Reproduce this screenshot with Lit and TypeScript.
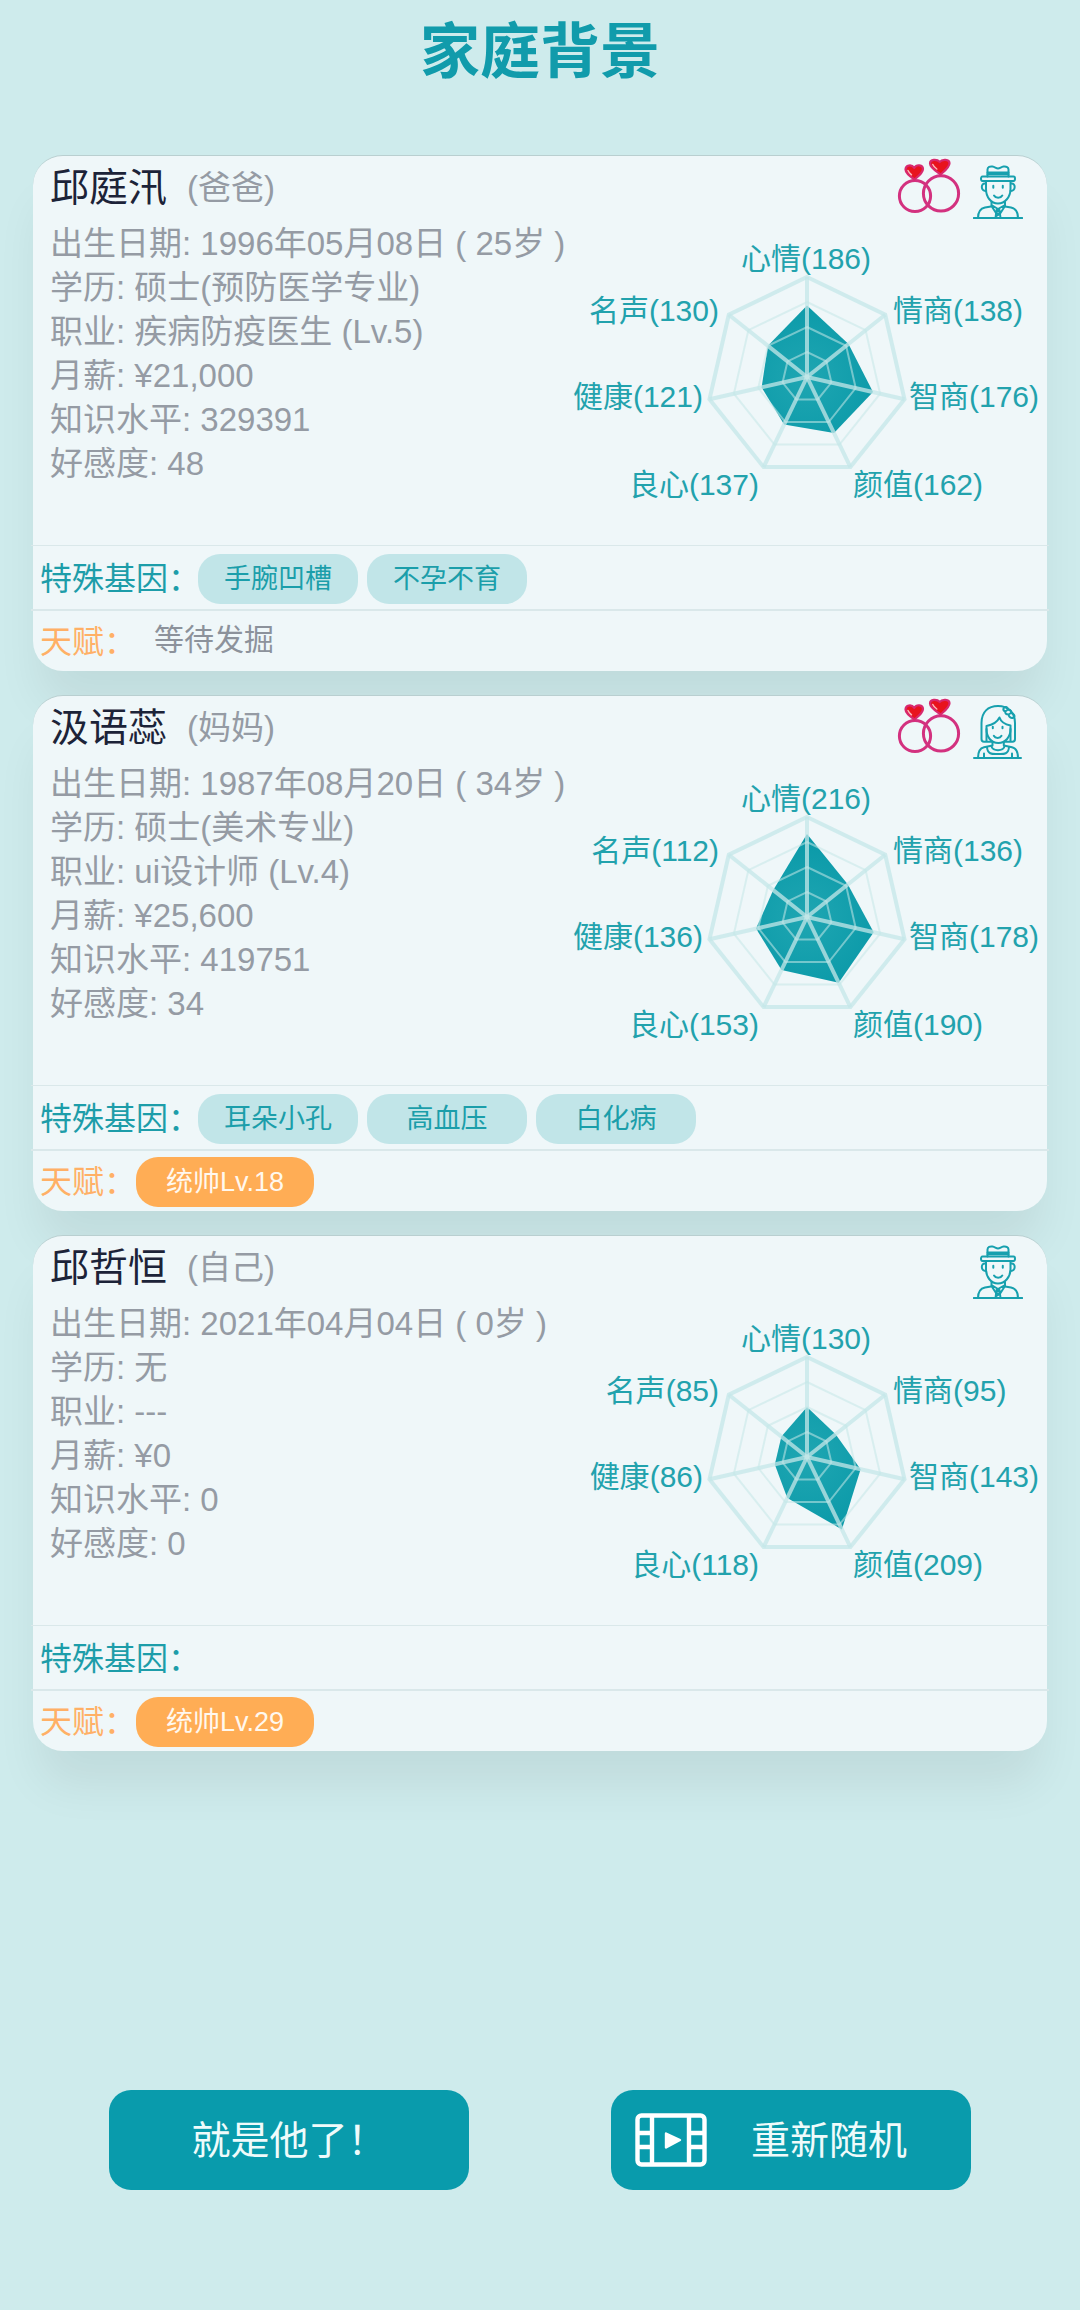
import { LitElement, html, svg, css, nothing } from "lit";
import { customElement, property } from "lit/decorators.js";

interface Person {
  name: string;
  role: string;
  gender: "male" | "female";
  married: boolean;
  facts: [string, string][];
  /* mood, EQ, IQ, looks, conscience, health, fame */
  stats: number[];
  genes: string[];
  talent?: string;
}

const PEOPLE: Person[] = [
  {
    name: "邱庭汛",
    role: "爸爸",
    gender: "male",
    married: true,
    facts: [
      ["出生日期", "1996年05月08日 ( 25岁 )"],
      ["学历", "硕士(预防医学专业)"],
      ["职业", "疾病防疫医生 (Lv.5)"],
      ["月薪", "¥21,000"],
      ["知识水平", "329391"],
      ["好感度", "48"],
    ],
    stats: [186, 138, 176, 162, 137, 121, 130],
    genes: ["手腕凹槽", "不孕不育"],
  },
  {
    name: "汲语蕊",
    role: "妈妈",
    gender: "female",
    married: true,
    facts: [
      ["出生日期", "1987年08月20日 ( 34岁 )"],
      ["学历", "硕士(美术专业)"],
      ["职业", "ui设计师 (Lv.4)"],
      ["月薪", "¥25,600"],
      ["知识水平", "419751"],
      ["好感度", "34"],
    ],
    stats: [216, 136, 178, 190, 153, 136, 112],
    genes: ["耳朵小孔", "高血压", "白化病"],
    talent: "统帅Lv.18",
  },
  {
    name: "邱哲恒",
    role: "自己",
    gender: "male",
    married: false,
    facts: [
      ["出生日期", "2021年04月04日 ( 0岁 )"],
      ["学历", "无"],
      ["职业", "---"],
      ["月薪", "¥0"],
      ["知识水平", "0"],
      ["好感度", "0"],
    ],
    stats: [130, 95, 143, 209, 118, 86, 85],
    genes: [],
    talent: "统帅Lv.29",
  },
];

const ringsIcon = html`
  <svg class="rings" viewBox="0 0 64 56" role="img" aria-label="已婚">
    <g fill="none" stroke="#d3317f" stroke-width="3">
      <circle cx="18" cy="38" r="15.6" />
      <circle cx="44" cy="35.4" r="17.6" />
    </g>
    <g fill="#e8131d" stroke="#d8296f" stroke-width="2.2" stroke-linejoin="round">
      <path d="M17.5 21.5C13 18.500 8.500 15 8.500 11.500C8.500 7 14.500 6 17.300 9.800C19.500 6 26 6.500 26 11C26 15 21 18.500 17.500 21.500Z" />
      <path d="M43.500 16.500C38.500 13 33 9.500 33 5.500C33 1.200 39.800 .8 42.800 4C45 .8 52.500 1 52.500 5.200C52.500 9.500 47.500 13 43.500 16.500Z" />
    </g>
    <g fill="none" stroke="#fbb9c0" stroke-width="1.5" stroke-linecap="round">
      <path d="M11 12.500C11.800 14.300 13 15.600 14.500 16.800" />
      <path d="M35.800 6.500C36.600 8.300 38 9.800 39.800 11" />
    </g>
  </svg>
`;

const manIcon = html`
  <svg class="avatar" viewBox="0 0 50 54" role="img" aria-label="男">
    <g fill="none" stroke="#17a0ae" stroke-width="2" stroke-linecap="round" stroke-linejoin="round">
      <path d="M14.500 11.500V4.500C14.500 2 17 1.200 19.500 1.600C22 2 23 3.400 25 3.400C27 3.400 28 2 30.500 1.600C33.500 1.200 35.500 2.200 35.500 4.500V11.500" />
      <path d="M14.500 7.600H35.500M14.500 9.200H35.500" />
      <path d="M9.500 11.500H40.500C42.500 11.500 42.500 15.800 40.500 16H9.500C7.500 15.800 7.500 11.500 9.500 11.500Z" />
      <path d="M13 16V24C13 32 18 38.500 25 38.500C32 38.500 37.500 32 37.500 24V16" />
      <path d="M12.500 18.500C7.500 17.500 7.500 26.500 13 26M38 18.500C43 17.500 43 26.500 37.500 26" />
      <path d="M21 30.500C22.800 33.600 27.500 33.600 29.300 30.500" />
      <path d="M20.300 20.800V22.800M29.800 20.800V22.800" />
      <path d="M.8 53H49.200M5 53C5 46.500 7.500 43.500 12 42.500L18 41.500M45 53C45 46.500 42.500 43.500 38 42.500L32 41.500" />
      <path d="M18.500 37V41L23 48L25 44L27.500 48L32 41V37M18.500 40L25 44L32 40" />
      <path d="M23.500 45L22.500 53M26.500 45L27.500 53M23 48.500H27M23.500 51L27 49" />
    </g>
  </svg>
`;

const womanIcon = html`
  <svg class="avatar" viewBox="0 0 50 54" role="img" aria-label="女">
    <g fill="none" stroke="#17a0ae" stroke-width="2" stroke-linecap="round" stroke-linejoin="round">
      <path d="M19 36.800H11C9 36.800 8.500 36 8.500 34V18C8.500 7 15 1 25 1C35 1 42 7.500 42 18V34C42 36 41.500 36.800 39.500 36.800H31.500" />
      <path d="M13.500 36V21C19 20 24 17.500 26.500 12.500C28 17 32 19.500 37.500 20.500V36" />
      <path d="M13.500 24C13.500 32 18 38 25.300 38C32.500 38 37.500 32 37.500 24" />
      <path d="M30.500 3.500C32 .8 34.500 2 35 4.500C38 4.500 38.500 6.500 38 8C41 8.500 42.500 11 40.500 12.500C38 13.800 36 12 35.500 9.500C33 9.500 32 8.500 32.300 6.500C31 6 30 5 30.500 3.500ZM32.300 6.500L35 4.500M35.500 9.500L38 8" />
      <path d="M20.800 30.800C22.300 33.600 27 33.600 28.500 30.800" />
      <path d="M19.800 21.800V23.300M29.500 21.800V23.300" />
      <path d="M1 53H48M5 53C5 46.500 6.500 43.300 11 42.300L19.500 40.500V37.500M45 53C45 46.500 43.500 43.300 39 42.300L30.800 40.500V37.500" />
      <path d="M14 42C14.500 50 20 49 25 49C30 49 35.500 50 36 42M18.500 41C18.500 46.500 31.500 46.500 31.500 41M11 53V48.500M39 53V48.500" />
    </g>
  </svg>
`;

const filmIcon = html`
  <svg class="film" viewBox="0 0 72 54" aria-hidden="true">
    <g fill="none" stroke="#fff" stroke-width="4.4">
      <rect x="2.500" y="2.500" width="67" height="49" rx="4" />
      <path d="M17 2V52M54 2V52M2 20H17M2 34H17M54 20H70M54 34H70" />
    </g>
    <path d="M31 20.500L45 27L31 34.500Z" fill="#fff" stroke="#fff" stroke-width="2.4" stroke-linejoin="round" />
  </svg>
`;

const AXES = [
  { label: "心情", x: 239, y: 48, anchor: "middle" },
  { label: "情商", x: 326, y: 100, anchor: "start" },
  { label: "智商", x: 342, y: 186, anchor: "start" },
  { label: "颜值", x: 286, y: 274, anchor: "start" },
  { label: "良心", x: 192, y: 274, anchor: "end" },
  { label: "健康", x: 136, y: 186, anchor: "end" },
  { label: "名声", x: 152, y: 100, anchor: "end" },
];
const CENTER = { x: 240, y: 156 };
const RADIUS = 100;
const MAX_STAT = 260;

const vertex = (axis: number, r: number): string => {
  const a = (axis / AXES.length) * Math.PI * 2;
  return `${(CENTER.x + Math.sin(a) * r).toFixed(1)},${(CENTER.y - Math.cos(a) * r).toFixed(1)}`;
};
const ring = (r: number) => AXES.map((_, i) => vertex(i, r)).join(" ");

@customElement("stat-radar")
class StatRadar extends LitElement {
  @property({ attribute: false }) values: number[] = [];

  static styles = css`
    :host {
      display: block;
    }
    .chart {
      display: block;
      width: 100%;
    }
    .area {
      fill: url(#tint);
    }
    .outer,
    .spoke {
      fill: none;
      stroke: #c4e7e8;
      stroke-opacity: 0.75;
      stroke-width: 4;
    }
    .inner {
      fill: none;
      stroke: #c4e7e8;
      stroke-opacity: 0.55;
      stroke-width: 2;
    }
    .label {
      fill: #22a2ad;
      font-size: 30px;
    }
  `;

  render() {
    const area = this.values.map((v, i) => vertex(i, (v / MAX_STAT) * RADIUS)).join(" ");
    return html`
      <svg class="chart" viewBox="0 0 480 324">
        <defs>
          <radialGradient id="tint" gradientUnits="userSpaceOnUse" cx="240" cy="156" r="80">
            <stop offset="0" stop-color="#1fa6b2" />
            <stop offset="1" stop-color="#0a99a8" />
          </radialGradient>
        </defs>
        <polygon class="area" points=${area} />
        ${[0.25, 0.5, 0.75].map((k) => svg`<polygon class="inner" points=${ring(RADIUS * k)} />`)}
        <polygon class="outer" points=${ring(RADIUS)} />
        ${AXES.map((_, i) => svg`<polyline class="spoke" points="${CENTER.x},${CENTER.y} ${vertex(i, RADIUS)}" />`)}
        ${AXES.map(
          (a, i) => svg`<text class="label" x=${a.x} y=${a.y} text-anchor=${a.anchor}>${a.label}(${this.values[i]})</text>`
        )}
      </svg>
    `;
  }
}

@customElement("person-card")
class PersonCard extends LitElement {
  @property({ attribute: false }) person!: Person;

  static styles = css`
    :host {
      display: block;
    }
    .card {
      box-sizing: border-box;
      border-top: 1px solid #b9cfd0;
      border-radius: 30px;
      background: #eff7f9;
      box-shadow: 0 40px 48px -8px rgba(0, 20, 20, 0.07);
    }
    .head {
      display: flex;
      align-items: flex-start;
      height: 65px;
      padding: 0 24px 0 17px;
    }
    .name {
      margin: 0;
      font-size: 39px;
      font-weight: 400;
      line-height: 64px;
      color: #1c2338;
    }
    .role {
      margin-left: 20px;
      font-size: 33px;
      line-height: 64px;
      color: #959ba4;
    }
    .icons {
      display: flex;
      gap: 12px;
      margin-left: auto;
    }
    .rings {
      width: 64px;
      height: 56px;
      margin-top: 2px;
    }
    .avatar {
      width: 50px;
      height: 54px;
      margin-top: 9px;
    }
    .body {
      display: flex;
    }
    .facts {
      flex: 1;
      min-width: 0;
      margin: 0;
      padding: 1px 0 0 17px;
      list-style: none;
      font-size: 33px;
      line-height: 44px;
      white-space: nowrap;
      color: #959ba4;
    }
    .radar {
      flex: 0 1 480px;
    }
    .row {
      display: flex;
      align-items: center;
      box-sizing: border-box;
      margin: 0 -2px;
      padding: 2px 9px 0;
      border-top: 2px solid #dae8ea;
    }
    .genes {
      min-height: 64px;
      gap: 9px;
      border-top-width: 1px;
    }
    .talents {
      min-height: 62px;
    }
    .title {
      font-size: 32px;
      line-height: 48px;
      color: #1d9da9;
    }
    .genes .title {
      margin-right: -11px;
    }
    .talents .title {
      color: #ffb066;
    }
    .pill {
      box-sizing: border-box;
      min-width: 160px;
      padding: 0 24px;
      border-radius: 22px;
      background: #c1e5e8;
      font-size: 27px;
      line-height: 50px;
      text-align: center;
      color: #1b9eaa;
    }
    .pill.gold {
      min-width: 178px;
      background: #ffad55;
      color: #fff8ee;
    }
    .pending {
      padding-left: 18px;
      font-size: 30px;
      line-height: 40px;
      padding-bottom: 4px;
      color: #8c929b;
    }
  `;

  render() {
    const p = this.person;
    return html`
      <article class="card">
        <header class="head">
          <h2 class="name">${p.name}</h2>
          <span class="role">(${p.role})</span>
          <span class="icons">
            ${p.married ? ringsIcon : nothing} ${p.gender === "male" ? manIcon : womanIcon}
          </span>
        </header>
        <div class="body">
          <ul class="facts">
            ${p.facts.map(([label, value]) => html`<li>${label}: ${value}</li>`)}
          </ul>
          <stat-radar class="radar" .values=${p.stats}></stat-radar>
        </div>
        <div class="row genes">
          <span class="title">特殊基因：</span>
          ${p.genes.map((g) => html`<span class="pill">${g}</span>`)}
        </div>
        <div class="row talents">
          <span class="title">天赋：</span>
          ${p.talent
            ? html`<span class="pill gold">${p.talent}</span>`
            : html`<span class="pending">等待发掘</span>`}
        </div>
      </article>
    `;
  }
}

@customElement("app-root")
class AppRoot extends LitElement {
  static styles = css`
    :host {
      display: flex;
      flex-direction: column;
      box-sizing: border-box;
      min-height: 100vh;
      padding: 0 33px 120px;
      background: #ceebec;
      font-family: "Liberation Sans", "Noto Sans CJK SC", sans-serif;
    }
    .heading {
      margin: 0;
      padding: 9px 0 58px;
      font-size: 60px;
      font-weight: 700;
      line-height: 88px;
      text-align: center;
      color: #119bab;
    }
    .list {
      display: flex;
      flex-direction: column;
      gap: 24px;
    }
    .actions {
      display: flex;
      justify-content: space-between;
      gap: 24px;
      margin-top: auto;
      padding: 60px 76px 0;
    }
    .action {
      display: flex;
      align-items: center;
      justify-content: center;
      flex: 0 1 360px;
      height: 100px;
      padding: 0 24px;
      border: 0;
      border-radius: 22px;
      background: #099bac;
      font-family: inherit;
      font-size: 39px;
      color: #effbfb;
    }
    .film {
      flex: none;
      width: 72px;
      height: 54px;
    }
    .label {
      padding-bottom: 6px;
    }
    .film + .label {
      flex: 1;
      padding-left: 4px;
    }
  `;

  render() {
    return html`
      <h1 class="heading">家庭背景</h1>
      <main class="list">
        ${PEOPLE.map((p) => html`<person-card .person=${p}></person-card>`)}
      </main>
      <footer class="actions">
        <button class="action" type="button"><span class="label">就是他了！</span></button>
        <button class="action" type="button">${filmIcon}<span class="label">重新随机</span></button>
      </footer>
    `;
  }
}
